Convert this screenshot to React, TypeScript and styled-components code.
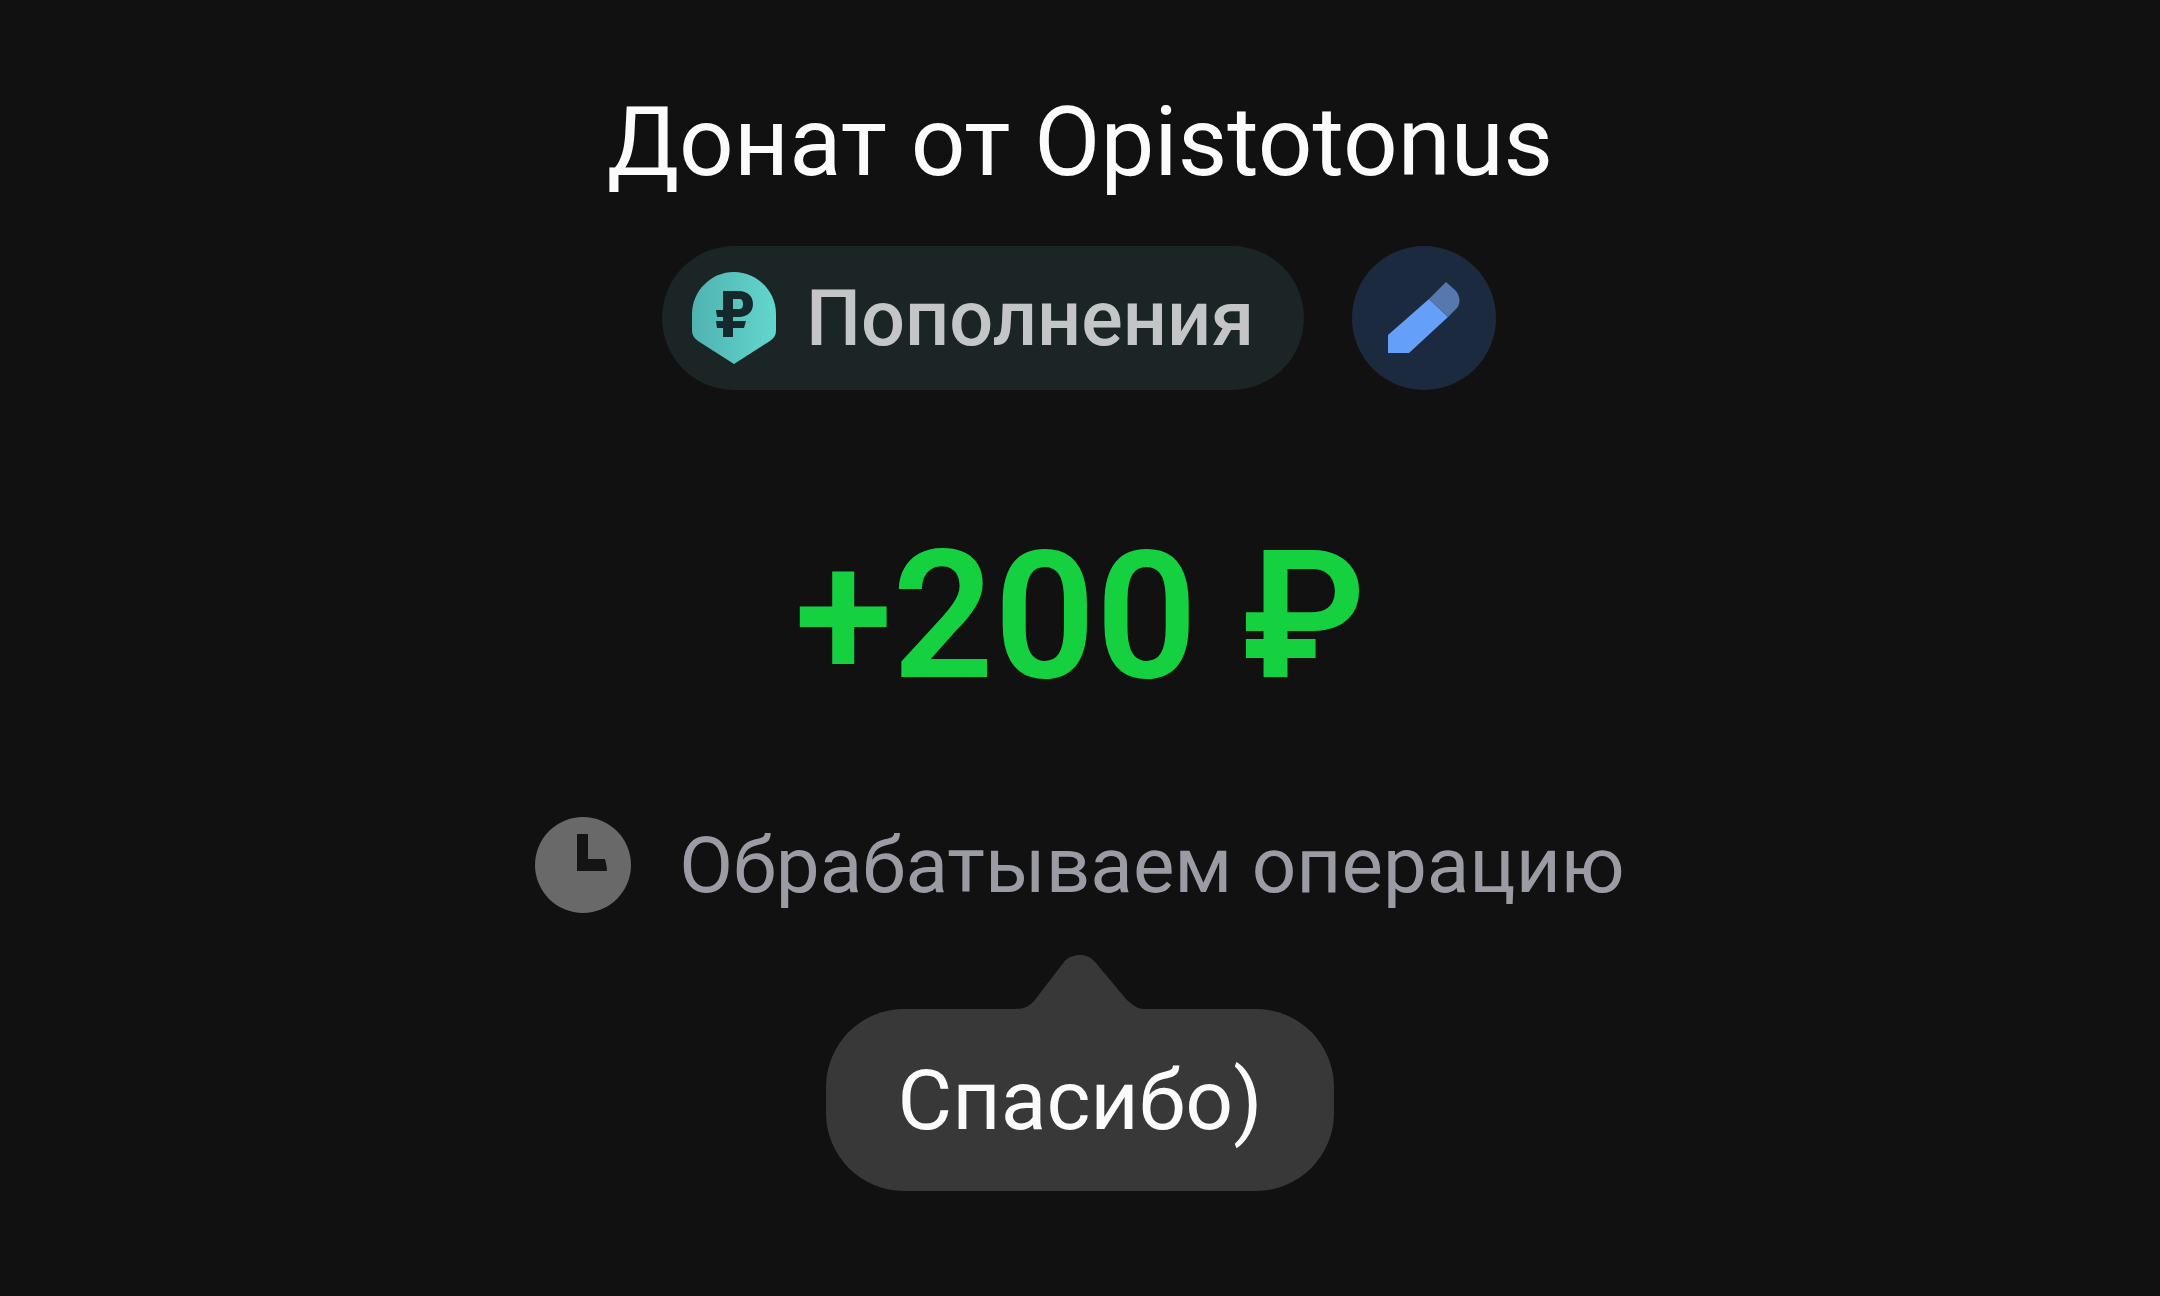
import React from "react";
import styled, { createGlobalStyle } from "styled-components";

const GlobalStyle = createGlobalStyle`
	html, body {
		margin: 0;
		padding: 0;
		background: #111112;
	}
`;

const Page = styled.div`
	width: 2160px;
	height: 1296px;
	overflow: hidden;
	background: #111112;
	font-family: Roboto, "Liberation Sans", sans-serif;
	display: flex;
	flex-direction: column;
	align-items: center;
	padding-top: 89px;
	box-sizing: border-box;
`;

const Title = styled.div`
	color: #fbfbfb;
	font-size: 96px;
	line-height: 106px;
	font-weight: 400;
`;

const TagRow = styled.div`
	display: flex;
	align-items: center;
	gap: 48px;
	margin-top: 51px;
	margin-right: 2px;
`;

const Tag = styled.div`
	width: 642px;
	height: 144px;
	box-sizing: border-box;
	padding-left: 30px;
	border-radius: 72px;
	background: #1b2526;
	display: flex;
	align-items: center;
	gap: 30px;
`;

const TagLabel = styled.span`
	color: #c4c5c6;
	font-size: 77.5px;
	font-weight: 500;
`;

const EditButton = styled.div`
	width: 144px;
	height: 144px;
	border-radius: 50%;
	background: #1c2a40;
	display: flex;
	align-items: center;
	justify-content: center;
`;

const Amount = styled.div`
	margin-top: 121px;
	color: #16d13f;
	font-size: 178px;
	line-height: 210px;
	font-weight: 600;
`;

const StatusRow = styled.div`
	display: flex;
	align-items: center;
	gap: 48px;
	margin-top: 96px;
`;

const StatusText = styled.span`
	color: #9a9ba3;
	font-size: 78.2px;
	line-height: 96px;
`;

const Bubble = styled.div`
	position: relative;
	margin-top: 96px;
	width: 508px;
	height: 182px;
	border-radius: 78px;
	background: #383839;
	display: flex;
	align-items: center;
	justify-content: center;
	color: #fbfbfb;
	font-size: 84px;
`;

const BubbleTail = styled.svg`
	position: absolute;
	left: 188px;
	top: -54px;
`;

const PinIcon = () => (
	<svg width="84" height="92" viewBox="0 0 84 92">
		<defs>
			<linearGradient id="pinFill" x1="0" y1="0" x2="1" y2="0">
				<stop offset="0" stopColor="#4fb3b1" />
				<stop offset="1" stopColor="#63d6cd" />
			</linearGradient>
		</defs>
		<path
			d="M42 0C65 0 84 19 84 42V58C84 63 82 66 78 69L42 92L6 69C2 66 0 63 0 58V42C0 19 19 0 42 0Z"
			fill="url(#pinFill)"
		/>
		<path
			d="M31 19H47C55 19 61 24 61 32C61 40 55 45 47 45H41V49H54L52 56H41V65H31V56H25L24 49H31V45H25L24 38H31ZM41 27V37H47C50 37 51 35 51 32C51 29 50 27 47 27Z"
			fill="#15282b"
			fillRule="evenodd"
		/>
	</svg>
);

const PencilIcon = () => (
	<svg width="72" height="72" viewBox="0 0 72 72">
		<path d="M0 53L41 17L60 35L21 71H0Z" fill="#64a0fa" />
		<path d="M41 17L58 0L67 8C72 13 73 21 69 26L60 35Z" fill="#5678ad" />
	</svg>
);

const ClockIcon = () => (
	<svg width="96" height="96" viewBox="0 0 96 96">
		<circle cx="48" cy="48" r="48" fill="#696969" />
		<path d="M42 17H53V42H70C71 46 72 50 72 54H42Z" fill="#141414" />
	</svg>
);

export default function App() {
	return (
		<Page>
			<GlobalStyle />
			<Title>Донат от Opistotonus</Title>
			<TagRow>
				<Tag>
					<PinIcon />
					<TagLabel>Пополнения</TagLabel>
				</Tag>
				<EditButton>
					<PencilIcon />
				</EditButton>
			</TagRow>
			<Amount>+200 ₽</Amount>
			<StatusRow>
				<ClockIcon />
				<StatusText>Обрабатываем операцию</StatusText>
			</StatusRow>
			<Bubble>
				<BubbleTail width="130" height="55" viewBox="0 0 130 55">
					<path
						d="M0 54C10 54 14 52 20 46L50 7C54 2 60 0 66 0C72 0 77 2 82 8L112 44C118 50 124 54 130 54V55H0Z"
						fill="#383839"
					/>
				</BubbleTail>
				Спасибо)
			</Bubble>
		</Page>
	);
}
